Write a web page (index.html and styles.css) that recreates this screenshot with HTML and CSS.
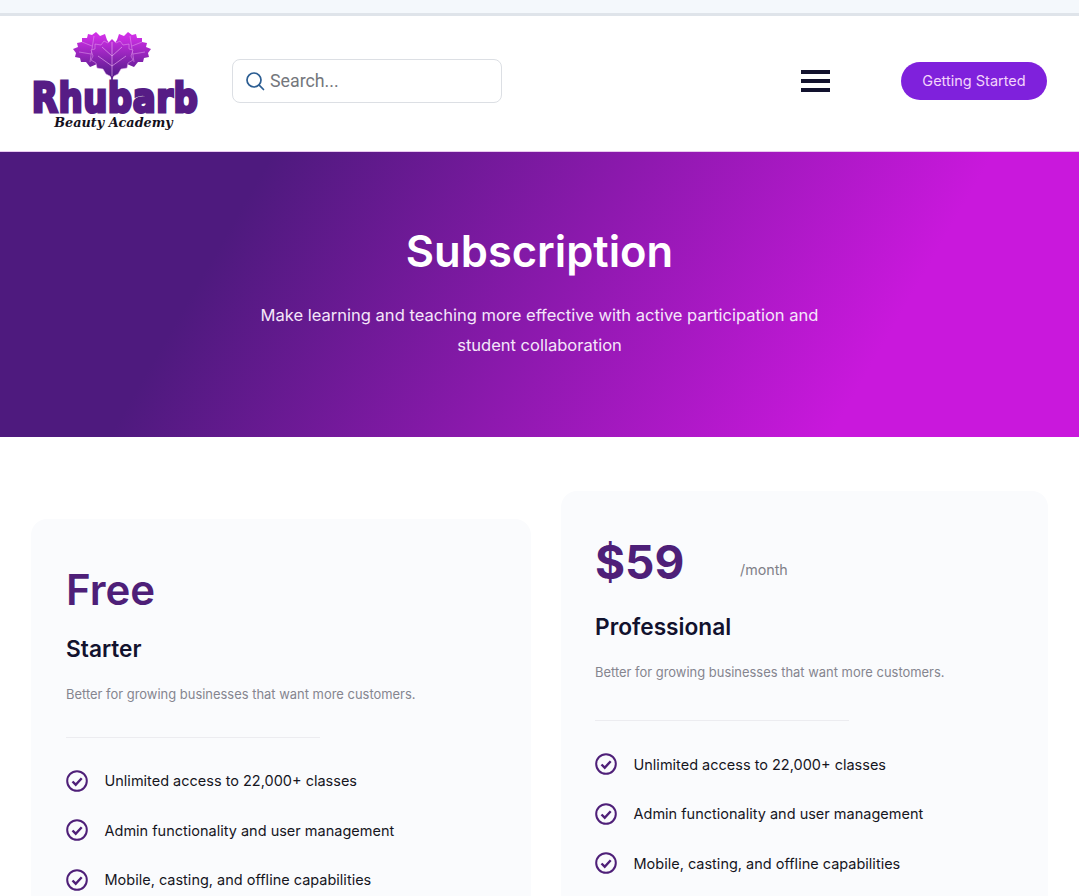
FILE: index.html
```html
<!DOCTYPE html>
<html lang="en">
<head>
    <meta charset="UTF-8">
    <meta name="viewport" content="width=device-width, initial-scale=1.0">
    <title>Subscription</title>
    <link rel="stylesheet" href="styles.css">
</head>
<body>
    <div class="topStrip"></div>
    <header class="header">
        <a class="logo" href="#">
            <svg class="logoMark" viewBox="0 0 80 50" width="80" height="50">
                <defs>
                    <linearGradient id="leaf" gradientUnits="userSpaceOnUse" x1="0" y1="4" x2="0" y2="46">
                        <stop offset="0" stop-color="#cf2fe6"/>
                        <stop offset="1" stop-color="#4f1a86"/>
                    </linearGradient>
                    <path id="sideLeaf" d="M24 0L28 4 33 2 35 8 38 12 30 30 18 35 14 30 9 30 8 26 3 25 4 21 1 17 6 15 5 11 10 10 10 6 15 6 16 2 20 3Z"/>
                </defs>
                <use href="#sideLeaf" fill="url(#leaf)"/>
                <use href="#sideLeaf" fill="url(#leaf)" transform="matrix(-1 0 0 1 80 0)"/>
                <path fill="none" stroke="#e9a7f0" stroke-width=".5" d="M22 4L18 30M20 14L10 10M19 22L7 20M58 4L62 30M60 14L70 10M61 22L73 20"/>
                <path fill="url(#leaf)" stroke="#e6a4ee" stroke-width=".5" d="M40 7L44 11 48 9 51 13 57 12 57 17 61 18 59 24 61 28 56 31 55 36 49 37 46 42 42 44 40 47 38 44 34 42 31 37 25 36 24 31 19 28 21 24 19 18 23 17 23 12 29 13 32 9 36 11Z"/>
                <path fill="none" stroke="#edb6f3" stroke-width=".6" d="M40 10V46M40 24L30 15M40 24L50 15M40 34L26 24M40 34L54 24"/>
                <path fill="#5a1a8c" d="M39.200 44h1.600v6h-1.600z"/>
            </svg>
            <span class="logoName">Rhubarb</span>
            <span class="logoSub">Beauty Academy</span>
        </a>
        <div class="search">
            <svg viewBox="0 0 20 20" width="20" height="20" fill="none" stroke="#2b5d92" stroke-width="1.700" stroke-linecap="round">
                <circle cx="9" cy="9" r="7"/>
                <path d="M14.200 14.200L18.500 18.500"/>
            </svg>
            <span class="searchText">Search...</span>
        </div>
        <div class="burger"><span></span><span></span><span></span></div>
        <a class="startBtn" href="#">Getting Started</a>
    </header>

    <section class="hero">
        <h1>Subscription</h1>
        <p>Make learning and teaching more effective with active participation and student collaboration</p>
    </section>

    <main class="plans">
        <div class="plan planLow">
            <div class="price">Free</div>
            <h3>Starter</h3>
            <p class="note">Better for growing businesses that want more customers.</p>
            <hr>
            <ul>
                <li><svg viewBox="0 0 22 22" width="22" height="22"><circle cx="11" cy="11" r="9.800"/><path class="tick" d="M6.500 11.500l3.200 3.200 6-6.500"/></svg>Unlimited access to 22,000+ classes</li>
                <li><svg viewBox="0 0 22 22" width="22" height="22"><circle cx="11" cy="11" r="9.800"/><path class="tick" d="M6.500 11.500l3.200 3.200 6-6.500"/></svg>Admin functionality and user management</li>
                <li><svg viewBox="0 0 22 22" width="22" height="22"><circle cx="11" cy="11" r="9.800"/><path class="tick" d="M6.500 11.500l3.200 3.200 6-6.500"/></svg>Mobile, casting, and offline capabilities</li>
            </ul>
        </div>
        <div class="plan planHigh">
            <div class="priceRow">
                <div class="price amount">$59</div>
                <span class="per">/month</span>
            </div>
            <h3>Professional</h3>
            <p class="note">Better for growing businesses that want more customers.</p>
            <hr>
            <ul>
                <li><svg viewBox="0 0 22 22" width="22" height="22"><circle cx="11" cy="11" r="9.800"/><path class="tick" d="M6.500 11.500l3.200 3.200 6-6.500"/></svg>Unlimited access to 22,000+ classes</li>
                <li><svg viewBox="0 0 22 22" width="22" height="22"><circle cx="11" cy="11" r="9.800"/><path class="tick" d="M6.500 11.500l3.200 3.200 6-6.500"/></svg>Admin functionality and user management</li>
                <li><svg viewBox="0 0 22 22" width="22" height="22"><circle cx="11" cy="11" r="9.800"/><path class="tick" d="M6.500 11.500l3.200 3.200 6-6.500"/></svg>Mobile, casting, and offline capabilities</li>
            </ul>
        </div>
    </main>
</body>
</html>
```

FILE: styles.css
```css
html, body{
    margin: 0; padding: 0;
    height: 896px;
    overflow: hidden;
    background: #fff;
    font-family: Inter, "Liberation Sans", sans-serif;
}
.topStrip{
    height: 13px;
    background: #f4f8fc;
    border-bottom: 3px solid #dfe4ea;
}
.header{
    height: 135px;
    display: flex;
    align-items: center;
    padding: 0 32px;
    border-bottom: 1px solid #e9c9ef;
}
.logo{
    width: 168px;
    flex: none;
    margin-top: -6px;
    display: flex;
    flex-direction: column;
    align-items: center;
    text-decoration: none;
}
.logoMark{
    display: block;
    margin-right: 8px;
}
.logoName{
    margin-right: 2px;
    font-family: "DejaVu Sans", sans-serif;
    font-weight: 700;
    font-size: 34px;
    line-height: 33px;
    letter-spacing: 0.500px;
    color: #561c85;
    -webkit-text-stroke: 2.500px #561c85;
    transform: scaleY(1.200);
}
.logoSub{
    margin-right: 5px;
    font-family: "DejaVu Serif", serif;
    font-style: italic;
    font-weight: 700;
    font-size: 12.800px;
    line-height: 15px;
    color: #14101c;
}
.search{
    width: 270px;
    height: 44px;
    margin-left: 32px;
    margin-top: -5px;
    display: flex;
    align-items: center;
    gap: 5px;
    padding-left: 12px;
    box-sizing: border-box;
    border: 1px solid #dcdfe4;
    border-radius: 8px;
}
.searchText{
    padding-bottom: 2px;
    font-family: Roboto, sans-serif;
    font-size: 17.800px;
    color: #74777c;
}
.burger{
    margin-left: auto;
    margin-top: -5px;
    width: 29px;
    display: flex;
    flex-direction: column;
    gap: 5.500px;
}
.burger span{
    height: 3.500px;
    background: #12122e;
}
.startBtn{
    margin-left: 71px;
    margin-top: -5px;
    height: 38px;
    width: 146px;
    padding-bottom: 2px;
    box-sizing: border-box;
    display: flex;
    align-items: center;
    justify-content: center;
    border-radius: 20px;
    background: #7f21dc;
    color: #f3d4fb;
    font-size: 14.500px;
    text-decoration: none;
}
.hero{
    height: 285px;
    box-sizing: border-box;
    padding-top: 72px;
    text-align: center;
    color: #fff;
    background: linear-gradient(120deg, #4e1a7e 22%, #c918dc 80%);
}
.hero h1{
    margin: 0;
    font-weight: 600;
    font-size: 43.500px;
    line-height: 54px;
}
.hero p{
    width: 600px;
    margin: 22px auto 0;
    font-size: 16.530px;
    line-height: 30px;
    color: #f5e6fa;
}
.plans{
    display: flex;
    align-items: flex-start;
    gap: 30px;
    padding: 54px 31px 0;
}
.plan{
    flex: 1;
    box-sizing: border-box;
    padding: 41px 34px 60px;
    height: 480px;
    border-radius: 16px;
    background: #fafbfd;
}
.planLow{
    flex: 0 0 500px;
    margin-top: 28px;
    padding: 41px 35px 60px;
}
.price{
    font-size: 42px;
    font-weight: 600;
    line-height: 60px;
    color: #4e1f78;
}
.amount{
    width: 145px;
    font-weight: 700;
    font-size: 46px;
}
.priceRow{
    display: flex;
    align-items: center;
}
.per{
    font-size: 14.300px;
    margin-top: 14px;
    color: #808088;
}
.plan h3{
    margin: 15px 0 0;
    font-weight: 600;
    font-size: 22.700px;
    line-height: 28px;
    color: #12122e;
}
.planHigh h3{
    margin-top: 21px;
}
.note{
    margin: 21px 0 0;
    font-size: 12.950px;
    line-height: 20px;
    color: #85858f;
}
hr{
    width: 254px;
    margin: 32.500px 0 0;
    border: 0;
    border-top: 1px solid #ececf0;
}
.planHigh hr{
    margin-top: 37.500px;
}
ul{
    margin: 32px 0 0; padding: 0;
    list-style: none;
}
.planHigh ul{
    margin-top: 32.500px;
}
li{
    display: flex;
    align-items: center;
    gap: 16.500px;
    height: 22px;
    margin-bottom: 27.500px;
    font-size: 14.500px;
    color: #16161e;
}
li svg{
    flex: none;
    fill: none;
    stroke: #4e1f78;
    stroke-width: 2;
}
li svg .tick{
    stroke-width: 2.400;
}
```
